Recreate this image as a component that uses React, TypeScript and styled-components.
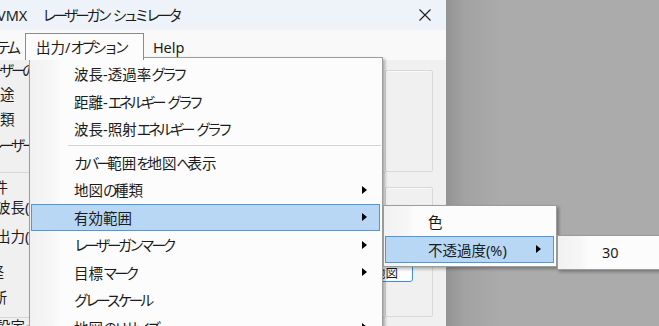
import styled, { createGlobalStyle } from 'styled-components';

const GlobalStyle = createGlobalStyle`
  html, body {
    margin: 0;
    padding: 0;
    width: 659px;
    height: 326px;
    overflow: hidden;
  }

  body {
    font-family: "Noto Sans", "Noto Sans CJK JP", sans-serif;
    font-size: 14.5px;
    color: #1b1b1b;
  }
`;

const StyledScreen = styled.div`
  position: relative;
  display: flex;
  width: 659px;
  height: 326px;
  overflow: hidden;
  background: #ababab;
`;

const StyledWindow = styled.div`
  display: flex;
  flex-direction: column;
  flex-shrink: 0;

  width: 446px;
  background: #f0f0f0;
`;

const StyledDesktop = styled.div`
  flex: 1;
  background: linear-gradient(to right, #939393 0, #a2a2a2 18px, #ababab 55px);
`;

const StyledTitleBar = styled.div`
  display: flex;
  flex-shrink: 0;
  align-items: center;
  justify-content: space-between;

  height: 30px;
  padding-right: 15px;
  background: #eef3f9;
`;

const StyledTitle = styled.div`
  display: flex;
  gap: 15px;
  margin-left: -3px;
  line-height: 26px;
  white-space: nowrap;
`;

// the proportional kana of the original UI font: narrow the kana runs only
const StyledKana = styled.span`
  letter-spacing: -3.4px;
`;

const StyledSpace = styled.span`
  display: inline-block;
  width: 4px;
`;

const StyledMenuBar = styled.div`
  display: flex;
  flex-shrink: 0;
  align-items: flex-end;

  height: 30px;
  background: #f9f9f9;
`;

const StyledTopItem = styled.div<{ $open?: boolean; $shift?: number; $left: number; $right: number }>`
  position: relative;
  z-index: 3;

  display: flex;
  align-items: flex-start;

  height: 27px;
  margin-left: ${(p) => -(p.$shift ?? 0)}px;
  padding: 2px ${(p) => p.$right}px 0 ${(p) => p.$left}px;
  box-sizing: border-box;

  line-height: 22px;
  white-space: nowrap;

  border: 1px solid ${(p) => (p.$open ? '#8c8c8c' : 'transparent')};
  border-bottom: none;
  background: ${(p) => (p.$open ? '#fcfcfc' : 'transparent')};
`;

const StyledContent = styled.div`
  display: flex;
  flex: 1;
  min-height: 0;
  overflow: hidden;
`;

const StyledLeftColumn = styled.div`
  display: flex;
  flex-direction: column;
  flex-shrink: 0;
  width: 385px;
`;

const StyledLabel = styled.div<{ $shift: number; $top: number }>`
  flex-shrink: 0;
  height: 20px;
  margin-top: ${(p) => p.$top}px;
  margin-left: ${(p) => -p.$shift}px;
  line-height: 20px;
  white-space: nowrap;
`;

const StyledRule = styled.div<{ $top: number }>`
  flex-shrink: 0;
  height: 1px;
  margin-top: ${(p) => p.$top}px;
  background: #d6d6d6;
`;

const StyledRightColumn = styled.div`
  display: flex;
  flex-direction: column;
  gap: 15px;

  width: 48px;
  padding-top: 10px;
`;

const StyledGroupBox = styled.div<{ $height: number }>`
  flex-shrink: 0;
  box-sizing: border-box;
  height: ${(p) => p.$height}px;
  padding-top: 75px;

  border: 1px solid #d8d8d8;
  border-radius: 2px;
  box-shadow: inset 1px 1px 0 #f8f8f8;
`;

const StyledCombo = styled.div`
  display: flex;
  align-items: center;
  justify-content: flex-end;

  width: 41px;
  height: 19px;
  margin-left: -14px;
  padding-right: 14px;
  box-sizing: border-box;

  font-size: 12.5px;
  white-space: nowrap;
  overflow: hidden;

  background: #ffffff;
  border: 1px solid #3b8fe2;
  border-radius: 0 0 3px 0;
`;

const StyledPopup = styled.div<{ $left: number; $top: number; $width: number }>`
  position: absolute;
  left: ${(p) => p.$left}px;
  top: ${(p) => p.$top}px;
  z-index: 2;

  width: ${(p) => p.$width}px;
  padding: 2px 0 3px;
  box-sizing: border-box;

  background: linear-gradient(to right, #f1f1f1 0, #f7f7f7 24px, #fcfcfc 30px);
  border: 1px solid #9c9c9c;
  box-shadow: 2px 2px 3px rgba(0, 0, 0, 0.3);
`;

const StyledMenuItem = styled.div<{ $active?: boolean }>`
  display: flex;
  align-items: center;
  justify-content: space-between;

  height: 27.5px;
  margin: 0 2px 0 1px;
  padding: 0 13px 0 43px;
  box-sizing: border-box;

  white-space: nowrap;

  background: ${(p) => (p.$active ? '#b7d7f4' : 'transparent')};
  box-shadow: ${(p) => (p.$active ? 'inset 0 0 0 1px #4a98e0' : 'none')};
`;

const StyledArrow = styled.span`
  width: 0;
  height: 0;
  border-left: 5px solid #000000;
  border-top: 4px solid transparent;
  border-bottom: 4px solid transparent;
`;

const StyledSeparator = styled.div`
  height: 1px;
  margin: 2.5px 1px 2.5px 38px;
  background: #d4d4d4;
`;

const KANA = /[\u3040-\u30ff]/;

function Jp({ text }: { text: string }) {
  const runs: { kind: 'kana' | 'space' | 'other'; s: string }[] = [];
  for (const ch of text) {
    const kind = ch === ' ' ? 'space' : KANA.test(ch) ? 'kana' : 'other';
    const last = runs[runs.length - 1];
    if (last && last.kind === kind) last.s += ch;
    else runs.push({ kind, s: ch });
  }
  return (
    <>
      {runs.map((r, i) =>
        r.kind === 'kana' ? (
          <StyledKana key={i}>{r.s}</StyledKana>
        ) : r.kind === 'space' ? (
          <StyledSpace key={i} />
        ) : (
          <span key={i}>{r.s}</span>
        ),
      )}
    </>
  );
}

type Entry = { label?: string; sub?: boolean; active?: boolean };

const mainMenu: Entry[] = [
  { label: '波長-透過率グラフ' },
  { label: '距離-エネルギー グラフ' },
  { label: '波長-照射エネルギー グラフ' },
  {},
  { label: 'カバー範囲を地図へ表示' },
  { label: '地図の種類', sub: true },
  { label: '有効範囲', sub: true, active: true },
  { label: 'レーザーガンマーク', sub: true },
  { label: '目標マーク', sub: true },
  { label: 'グレースケール' },
  { label: '地図のリサイズ', sub: true },
];

const rangeMenu: Entry[] = [{ label: '色' }, { label: '不透過度(%)', sub: true, active: true }];

const opacityMenu: Entry[] = [{ label: '30' }];

const labels = [
  { text: 'レーザーの種類', shift: 22, top: 0 },
  { text: '用途', shift: 14.5, top: 4 },
  { text: '種類', shift: 14.5, top: 5 },
  { text: 'レーザー', shift: 11, top: 6 },
  { rule: 17 },
  { text: '条件', shift: 21, top: 4 },
  { text: '波長(nm)', shift: 4, top: 0 },
  { text: '出力(W)', shift: 4, top: 9 },
  { text: '半径', shift: 25, top: 16 },
  { text: '判断', shift: 22, top: 5 },
  { rule: 10 },
  { text: '設定ー', shift: 4, top: -2 },
];

function Menu({ items, left, top, width }: { items: Entry[]; left: number; top: number; width: number }) {
  return (
    <StyledPopup $left={left} $top={top} $width={width}>
      {items.map((item, i) =>
        item.label ? (
          <StyledMenuItem key={i} $active={item.active}>
            <span>
              <Jp text={item.label} />
            </span>
            {item.sub && <StyledArrow />}
          </StyledMenuItem>
        ) : (
          <StyledSeparator key={i} />
        ),
      )}
    </StyledPopup>
  );
}

function CloseIcon() {
  return (
    <svg width="12" height="12" viewBox="0 0 12 12">
      <path d="M0.5 0.5 L11.5 11.5 M11.5 0.5 L0.5 11.5" stroke="#1b1b1b" strokeWidth="1.1" fill="none" />
    </svg>
  );
}

export default function App() {
  return (
    <StyledScreen>
      <GlobalStyle />
      <StyledWindow>
        <StyledTitleBar>
          <StyledTitle>
            <span>VMX</span>
            <span>
              <Jp text="レーザーガン シュミレータ" />
            </span>
          </StyledTitle>
          <CloseIcon />
        </StyledTitleBar>

        <StyledMenuBar>
          <StyledTopItem $shift={33} $left={6} $right={6}>
            <span>
              <Jp text="システム" />
            </span>
          </StyledTopItem>
          <StyledTopItem $open $left={10} $right={17}>
            <span>
              <Jp text="出力/オプション" />
            </span>
          </StyledTopItem>
          <StyledTopItem $left={8} $right={8}>
            Help
          </StyledTopItem>
        </StyledMenuBar>

        <StyledContent>
          <StyledLeftColumn>
            {labels.map((l, i) =>
              l.text ? (
                <StyledLabel key={i} $shift={l.shift ?? 0} $top={l.top ?? 0}>
                  <Jp text={l.text} />
                </StyledLabel>
              ) : (
                <StyledRule key={i} $top={l.rule ?? 0} />
              ),
            )}
          </StyledLeftColumn>

          <StyledRightColumn>
            <StyledGroupBox $height={102} />
            <StyledGroupBox $height={130}>
              <StyledCombo>地図</StyledCombo>
            </StyledGroupBox>
          </StyledRightColumn>
        </StyledContent>
      </StyledWindow>
      <StyledDesktop />

      <Menu items={mainMenu} left={29} top={57} width={354} />
      <Menu items={rangeMenu} left={383} top={205} width={174} />
      <Menu items={opacityMenu} left={557} top={235} width={130} />
    </StyledScreen>
  );
}
